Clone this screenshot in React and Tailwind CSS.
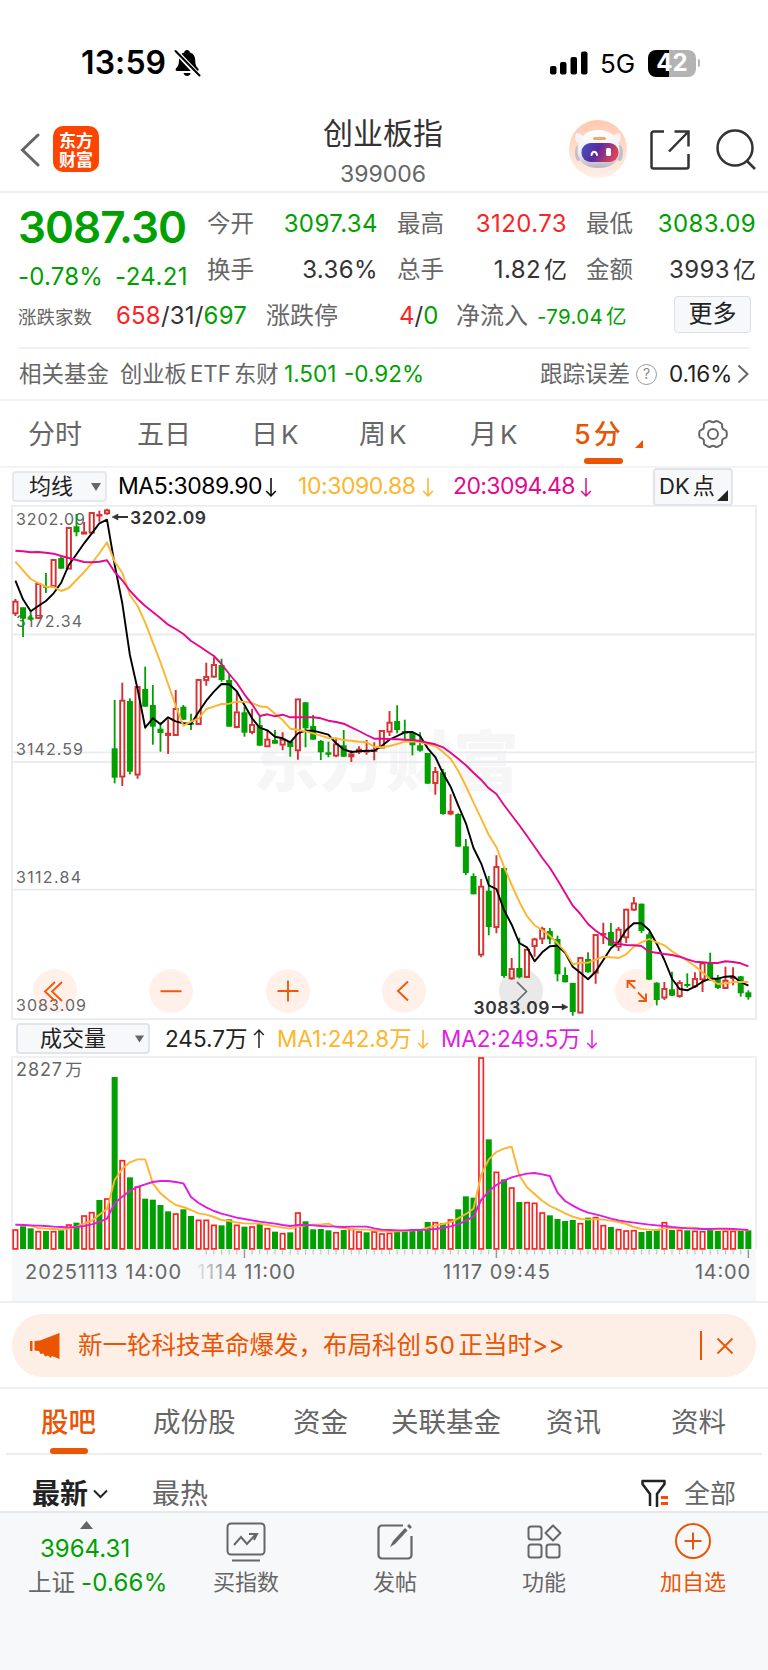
const STEP = 7.635;
const xAt = (i) => 15.4 + i * STEP;

// [up, high, bodyTop, bodyBottom, low]
const CANDLES = [
  [1, 599, 601, 614, 616], [0, 607.3, 607.3, 618.7, 637], [0, 611.5, 617.5, 619.7, 620.7], [1, 583.3, 583.3, 618.7, 618.7],
  [0, 573, 586.3, 587.7, 593], [1, 559.3, 559.3, 586.7, 586.7], [0, 556, 558, 568.7, 568.7], [1, 527.3, 527.3, 569.3, 569.3],
  [0, 514, 526.3, 532.3, 536.3], [1, 522, 531.7, 534.3, 534.3], [1, 512.3, 512.3, 533.3, 533.3], [1, 510.7, 514.3, 516.3, 521.7],
  [1, 508.7, 509.7, 514, 514.7], [0, 700, 748.3, 777.7, 783.3], [1, 682.7, 700, 777.3, 786], [0, 698.3, 701, 771.7, 774.3],
  [1, 686, 686.3, 775.3, 778.7], [0, 666.7, 689, 706.7, 706.7], [0, 685, 705, 726.7, 744.7], [0, 722.3, 728.7, 733, 751.7],
  [1, 719.3, 733, 735.7, 754], [1, 690, 708.3, 735.7, 736], [0, 705, 706.7, 719.7, 720], [0, 713.7, 723, 724.7, 730],
  [1, 679.3, 679.3, 724.7, 724.7], [1, 662.7, 676.3, 680.7, 685.7], [1, 657.3, 664.3, 677.3, 677.7], [0, 658.7, 665, 680, 681.7],
  [0, 674, 680, 726.7, 726.7], [1, 691.3, 711.7, 727.7, 728.3], [0, 706.7, 712.3, 732.7, 736.7], [1, 708.7, 724.3, 732.7, 734.3],
  [0, 715.7, 725, 745.7, 745.7], [1, 730, 739, 747, 747], [0, 730, 740, 743.7, 743.7], [1, 732.3, 739, 745.3, 750.3],
  [0, 740.7, 741.3, 747, 756.7], [1, 698.7, 698.7, 751, 759.7], [0, 702, 702.3, 728.3, 747.3], [0, 715, 726, 739.7, 739.7],
  [0, 740, 741, 752.3, 760], [0, 741.7, 752.3, 754.7, 757.3], [1, 737.7, 743.7, 756.3, 757.3], [0, 730, 745.3, 756.7, 757],
  [1, 750.3, 753.7, 757, 762], [1, 746.3, 749, 752.3, 754], [1, 740, 750.3, 752.3, 754.7], [1, 742.3, 749.7, 750.7, 760.3],
  [1, 730.3, 730.3, 748.3, 748.3], [1, 711, 722, 732.3, 736], [0, 705.3, 721, 730, 733.3], [0, 719.7, 731, 733.5, 740.3],
  [0, 731.3, 732.3, 745.3, 755.3], [0, 732.3, 745.3, 750.7, 751.7], [0, 753, 753, 783.7, 783.7], [1, 767, 771.3, 783.7, 794.7],
  [0, 769, 772.3, 814, 814.7], [1, 794.3, 811, 814.3, 815.3], [0, 813.3, 814, 846.7, 846.7], [0, 839, 846.3, 873, 875],
  [0, 873.3, 876, 894.3, 894.3], [1, 879, 886, 955.3, 957.3], [0, 876, 890.7, 927, 935.3], [1, 855.3, 866.3, 927.7, 933.3],
  [0, 867.7, 868, 976, 977.7], [1, 958, 968.3, 979, 979.7], [0, 937.7, 968, 977.3, 978.3], [1, 949, 949, 977.7, 977.7],
  [1, 937.7, 938.7, 946.7, 956.7], [1, 926.7, 928.3, 939.3, 944], [0, 928, 931, 939.3, 944], [0, 935.7, 939, 974.3, 981.3],
  [0, 967.3, 975, 982.3, 982.3], [0, 982.7, 983, 1012, 1015.7], [1, 957.3, 957.3, 1013.3, 1013.3], [0, 952.3, 959, 972.3, 972.7],
  [1, 934, 934.3, 973.3, 983.7], [1, 922.7, 933.3, 934.7, 944], [0, 923, 932, 945.7, 946], [1, 927, 929, 947.3, 951],
  [1, 908.7, 909, 938, 943], [1, 897, 902.7, 910.3, 911], [0, 903.5, 903.7, 931, 933], [0, 932.3, 934.3, 979.7, 980],
  [0, 982.3, 982.7, 1000, 1005.3], [1, 982, 988.3, 998.3, 1000], [0, 971.7, 989.3, 995.7, 996], [1, 980.3, 982.3, 996.7, 997.7],
  [0, 973.3, 984, 986, 987.7], [1, 972.3, 978.3, 987, 988], [1, 962.3, 962.7, 980, 992], [0, 952.7, 962.7, 979, 981],
  [0, 975, 978.3, 988, 989], [1, 966.7, 980, 988.7, 988.7], [1, 967.3, 976.7, 978.7, 985.3], [0, 976, 976.3, 993.3, 996.7],
  [0, 990.3, 992.3, 997.3, 999.7],
];

const MA5 = [
  580.7, 599.3, 611.3, 606, 601, 593.3, 582.7, 565, 554.3, 543.3, 533.3, 523.3, 519.7, 565, 603.3, 655, 689.3, 727.7, 718.3, 724.3,
  717.3, 721.3, 723.3, 724, 712, 700.7, 691.7, 684, 684.3, 691.3, 705, 718.3, 727.7, 730.3, 736.7, 738.3, 742.3, 733.3, 730.7, 730.7,
  732.7, 734.7, 743.3, 749.3, 752, 751.3, 750.7, 750.7, 745.7, 739.7, 736, 732.3, 732, 736, 748.3, 757, 773.3, 786.7, 805.3, 823.3,
  848, 863.3, 885.3, 889, 910, 924.7, 943, 947.3, 961.3, 952.3, 946.3, 945.7, 952.7, 966.7, 972.7, 979.3, 971.7, 960, 948.3, 942,
  930, 923.3, 923.3, 930, 943.7, 960, 978.7, 989, 990.3, 986.7, 981.7, 978.7, 978.7, 976.7, 976.3, 982, 985.7,
];

const MA10 = [
  561.7, 570.3, 579, 583, 586.7, 587, 591, 588, 580, 572, 563.3, 553.3, 542.3, 561.7, 572.7, 595, 606, 622.7, 642.3, 662.3,
  684, 705.7, 725.7, 721.7, 718.7, 709, 706.7, 704, 703.7, 701.7, 701.7, 703, 706.3, 707.3, 713.7, 720, 728.7, 730, 731.3, 733.3,
  735.7, 738, 738.3, 740, 740.7, 741.7, 742.3, 746.7, 747.3, 746, 744, 741.7, 741.3, 742, 744, 746, 752, 758.7, 770.7, 786,
  802.7, 818.3, 835, 847, 866.7, 885, 901.7, 916, 925.3, 930, 935.7, 943.3, 951.7, 964.3, 962.7, 962.7, 959.7, 956.7, 957.3, 958,
  954.3, 946.7, 942.3, 939, 942.3, 945.3, 951.3, 956, 960.7, 966, 972.3, 979.3, 984, 983.3, 982, 982, 982,
];

const MA20 = [
  550.7, 551.3, 552.3, 552, 552.7, 553.7, 556, 558, 560, 562, 562.3, 561.7, 560.3, 572, 580.3, 590.7, 599, 606, 612, 618.3,
  624.7, 629, 634, 641, 645.7, 651, 656, 664, 674, 683, 694.3, 704.3, 716, 714.3, 716.3, 714.7, 717.3, 717.3, 717.3, 717.3,
  718.3, 720.7, 722, 723.7, 727.3, 731, 735, 738.7, 738.7, 739, 739.3, 739.7, 740, 741, 742.7, 744.3, 747.3, 752.7, 758.7, 765.3,
  772.7, 779.7, 788.3, 794, 805, 815.3, 825.3, 835.7, 846.7, 857.7, 867.7, 880, 892.7, 905.7, 914, 924, 930.7, 935.7, 941.3, 944,
  945, 945.3, 946, 951.7, 952.7, 954, 955, 956.7, 959.3, 961.7, 962.3, 963, 963, 961.3, 962, 963.3, 966.3,
];

// volume series on a 0..580 scale measured from the top, negative = falling bar
const VOLUMES = [
  538, -529, -535, 543, -543, 543, -541, 523, -518, 496, 486, -450, 445, -81, 330, -382, 409, -446, -449, -465,
  -484, 490, -478, -498, 509, 509, 524, -526, -508, 524, -530, 529, -522, 534, -545, 549, -547, 487, -514, -538,
  -537, -541, 546, -540, 536, 544, -547, 544, 550, 548, -545, -543, -539, -541, -516, 516, -519, 508, -478, -439,
  -443, 22, -268, 365, -388, 412, -456, 456, 458, 487, -496, -507, -513, -510, 519, -503, 501, 525, -531, 537,
  541, 540, -546, -543, -540, 516, -540, 539, -541, 542, 543, -539, -543, 542, 542, -543, -541,
];

const VMA1 = [
  524, 525, 527, 534, 536, 537, 538, 536, 530, 521, 512, 494, 477, 390, 356, 337, 328, 328, 400, 430,
  449, 465, 471, 480, 490, 494, 501, 510, 513, 517, 520, 521, 521, 525, 529, 533, 536, 530, 526, 524,
  523, 521, 531, 535, 537, 539, 539, 541, 543, 545, 544, 543, 541, 540, 533, 527, 522, 516, 505, 492,
  476, 375, 328, 306, 296, 290, 376, 412, 432, 452, 468, 478, 490, 500, 507, 509, 507, 509, 512, 516,
  522, 531, 537, 539, 540, 535, 535, 534, 533, 533, 537, 538, 539, 539, 540, 540, 541,
];

const VMA2 = [
  524, 525, 526, 527, 528, 530, 531, 532, 531, 528, 523, 516, 506, 460, 440, 422, 411, 403, 396, 393,
  393, 396, 400, 441, 459, 472, 483, 491, 497, 503, 507, 511, 515, 518, 521, 525, 528, 525, 525, 526,
  528, 529, 530, 531, 530, 530, 530, 535, 539, 540, 541, 541, 540, 540, 539, 537, 534, 529, 523, 512,
  500, 450, 424, 405, 392, 382, 376, 371, 369, 373, 378, 428, 453, 467, 479, 488, 493, 499, 506, 511,
  515, 518, 521, 524, 526, 528, 531, 533, 535, 536, 537, 537, 536, 536, 537, 538, 540,
];

const toPoints = (values) => values.map((y, i) => `${xAt(i).toFixed(1)},${y}`).join(' ');
const volY = (v) => Math.abs(v) / 3 + 1050;

function Arrow({ up, className }) {
  return (
    <svg width="12" height="24" viewBox="0 0 12 24" fill="none" stroke="currentColor" strokeWidth="1.5" className={`shrink-0 ${className}`}>
      {up ? <path d="M6 21V3M1.2 8 6 3l4.8 5" /> : <path d="M6 3v18M1.2 16 6 21l4.8-5" />}
    </svg>
  );
}

function StatusBar() {
  return (
    <div className="flex h-[100px] items-center pt-[26px] pl-[81px] text-black">
      <span className="w-[93px] text-[32px] font-semibold tracking-[0.1px]">13:59</span>
      <svg width="27" height="28" viewBox="0 0 27 28">
        <path d="M13 1c1.700 0 2.700 1 2.900 2.400 3.600 1 5.300 4 5.300 7.600 0 5.500 1.500 6.600 3 8.500.8 1 .4 2.500-1 2.500H3C1.600 22 1.200 20.500 2 19.500c1.500-1.900 3-3 3-8.500 0-3.600 1.600-6.600 5.200-7.600C10.400 2 11.400 1 13 1Z" />
        <path d="M9.500 24h7.200c-.4 1.900-1.800 3-3.600 3s-3.200-1.100-3.600-3Z" />
        <path d="M1 1.500 25 27" stroke="#fff" strokeWidth="5" />
        <path d="M1.500 2 25.500 26.500" stroke="#000" strokeWidth="2" strokeLinecap="round" />
      </svg>
      <svg width="38" height="24" viewBox="0 0 38 24" className="ml-[349px]">
        <rect x="0" y="15" width="6.500" height="8.500" rx="2" />
        <rect x="10" y="11" width="6.500" height="12.500" rx="2" />
        <rect x="20.500" y="6" width="6.500" height="17.500" rx="2" />
        <rect x="31" y="0.500" width="6.500" height="23" rx="2" />
      </svg>
      <span className="ml-[12px] w-[48px] text-[26px]">5G</span>
      <div className="flex h-[27px] w-[48px] items-center justify-center rounded-[8px] bg-[linear-gradient(90deg,#000_43%,#b3b3b3_43%)] text-[24px] font-bold leading-none text-white">
        42
      </div>
      <div className="ml-[2px] h-[8px] w-[2px] rounded-r-full bg-[#b3b3b3]" />
    </div>
  );
}

function Robot() {
  return (
    <svg width="58" height="58" viewBox="0 0 58 58">
      <defs>
        <linearGradient id="halo" x1="0" y1="0" x2="0" y2="1">
          <stop offset="0" stopColor="#ffc9ad" />
          <stop offset="1" stopColor="#fff0e8" />
        </linearGradient>
        <linearGradient id="visor" x1="0" y1="0" x2="1" y2="0.300">
          <stop offset="0" stopColor="#3d55c8" />
          <stop offset="0.500" stopColor="#5a2aa0" />
          <stop offset="1" stopColor="#d9405a" />
        </linearGradient>
        <linearGradient id="shell" x1="0" y1="0" x2="0" y2="1">
          <stop offset="0" stopColor="#fff" />
          <stop offset="0.600" stopColor="#efedf1" />
          <stop offset="1" stopColor="#b9b4bd" />
        </linearGradient>
      </defs>
      <circle cx="29" cy="29" r="29" fill="url(#halo)" />
      <path d="M7 13c2 0 6 1 9 5l-8 5c-2-3-2-7-1-10ZM51 13c-2 0-6 1-9 5l8 5c2-3 2-7 1-10Z" fill="#f4f3f6" />
      <ellipse cx="9.500" cy="33" rx="3.500" ry="8" fill="#c2bec8" />
      <ellipse cx="50.500" cy="33" rx="3.500" ry="8" fill="#c2bec8" />
      <path d="M29 10c14 0 21.500 9 21.500 21C50.500 42 42 48 29.500 48S8.500 42 8.500 31C8.500 19 16 10 29 10Z" fill="url(#shell)" />
      <rect x="24" y="17" width="13" height="3" rx="1.500" fill="#f0a868" />
      <rect x="12.500" y="23" width="37" height="19" rx="9" fill="url(#visor)" />
      <path d="M22.500 35c1-4.500 4.500-4.500 5.500 0" fill="none" stroke="#fff" strokeWidth="2" strokeLinecap="round" />
      <rect x="37" y="28" width="5" height="8" rx="1.500" fill="#fff" />
    </svg>
  );
}

function Header() {
  return (
    <div className="flex h-[93px] items-start border-b-2 border-[#eeeeee]">
      <svg width="20" height="34" viewBox="0 0 20 34" className="mt-[33px] ml-[20px]" fill="none" stroke="#666" strokeWidth="3">
        <path d="M18 2 2.500 17 18 32" strokeLinecap="round" />
      </svg>
      <div className="mt-[26px] ml-[13px] flex h-[46px] w-[46px] flex-col items-center justify-center rounded-[10px] bg-[#ff4400] font-['Noto_Sans_CJK_SC',sans-serif] text-[17px] font-bold leading-[19px] text-white">
        <span>东方</span>
        <span>财富</span>
      </div>
      <div className="ml-[184px] flex w-[200px] flex-col items-center">
        <div className="mt-[14px] text-[30px] leading-[38px] text-[#333]">创业板指</div>
        <div className="mt-[8px] text-[23px] leading-[28px] text-[#666]">399006</div>
      </div>
      <div className="mt-[20px] ml-[86px]"><Robot /></div>
      <svg width="42" height="42" viewBox="0 0 42 42" className="mt-[29px] ml-[22px]" fill="none" stroke="#333" strokeWidth="2.500">
        <path d="M15 2.500H4.500a2 2 0 0 0-2 2v33a2 2 0 0 0 2 2h33a2 2 0 0 0 2-2V25M20 22.500 39 3M25.500 2.500h14v15" />
      </svg>
      <svg width="44" height="44" viewBox="0 0 44 44" className="mt-[28px] ml-[24px]" fill="none" stroke="#333" strokeWidth="2.500">
        <circle cx="20" cy="20" r="17.500" />
        <path d="m32 33 8 8" />
      </svg>
    </div>
  );
}

function Stat({ label, value, unit, color }) {
  return (
    <div className="flex items-center justify-between">
      <span className="text-[23.5px] text-[#666]">{label}</span>
      <span className={`text-[24px] tracking-[0.4px] ${color}`}>
        {value}
        {unit && <span className="ml-[3px] text-[23px] tracking-normal">{unit}</span>}
      </span>
    </div>
  );
}

function Quote() {
  return (
    <div className="h-[208px] border-b-2 border-[#f4f4f4]">
      <div className="grid h-[104px] grid-cols-[170px_171px_170px_170px] gap-x-[19px] pl-[18px]">
        <div className="text-[#00a000]">
          <div className="mt-[7px] text-[44px] font-semibold leading-[54px] tracking-[-1px]">3087.30</div>
          <div className="mt-[8px] flex text-[24px] leading-[30px]">
            <span className="w-[97px] tracking-[0.2px]">-0.78%</span>
            <span className="tracking-[0.4px]">-24.21</span>
          </div>
        </div>
        <div className="flex flex-col pt-[8px] leading-[46px]">
          <Stat label="今开" value="3097.34" color="text-[#00a000]" />
          <Stat label="换手" value="3.36%" color="text-[#333]" />
        </div>
        <div className="flex flex-col pt-[8px] leading-[46px]">
          <Stat label="最高" value="3120.73" color="text-[#f92525]" />
          <Stat label="总手" value="1.82" unit="亿" color="text-[#333]" />
        </div>
        <div className="flex flex-col pt-[8px] leading-[46px]">
          <Stat label="最低" value="3083.09" color="text-[#00a000]" />
          <Stat label="金额" value="3993" unit="亿" color="text-[#333]" />
        </div>
      </div>

      <div className="flex h-[50px] items-center pb-[13px] pl-[18px] text-[24px] text-[#666]">
        <span className="w-[98px] pt-[5px] text-[18.5px]">涨跌家数</span>
        <span className="w-[150px] tracking-[0.2px] text-[#333]">
          <span className="text-[#f92525]">658</span>/31/<span className="text-[#00a000]">697</span>
        </span>
        <span className="w-[133px]">涨跌停</span>
        <span className="w-[57px] text-[#333]">
          <span className="text-[#f92525]">4</span>/<span className="text-[#00a000]">0</span>
        </span>
        <span className="w-[81px]">净流入</span>
        <span className="w-[137px] pt-[4px] text-[20.5px] tracking-[0.3px] text-[#00a000]">-79.04<span className="ml-[3px]">亿</span></span>
        <span className="-mt-[3px] flex h-[37px] w-[77px] items-center justify-center rounded-[4px] border border-[#dcdfe8] bg-[#f7f8fa] text-[24px] text-[#222]">
          更多
        </span>
      </div>

      <div className="mx-[19px] flex h-[52px] items-center border-t-2 border-[#f1f1f1] text-[22.5px] text-[#666]">
        <span className="w-[101px]">相关基金</span>
        <span className="w-[164px] text-[22.300px]">创业板<span className="mx-[3px]">ETF</span>东财</span>
        <span className="w-[60px] text-[#00a000]">1.501</span>
        <span className="w-[196px] text-[#00a000]">-0.92%</span>
        <span className="w-[96px]">跟踪误差</span>
        <span className="flex h-[21px] w-[21px] shrink-0 items-center justify-center rounded-full border-[1.5px] border-[#999] text-[14px] leading-none text-[#888]">?</span>
        <span className="ml-[12px] w-[68px] shrink-0 text-[#222]">0.16%</span>
        <svg width="12" height="20" viewBox="0 0 12 20" className="shrink-0" fill="none" stroke="#666" strokeWidth="2">
          <path d="m1.500 1.500 9 8.500-9 8.500" />
        </svg>
      </div>
    </div>
  );
}

function PeriodTabs() {
  return (
    <div className="grid h-[67px] grid-cols-[109px_114px_108px_111px_104px_123px_98px] border-b-2 border-[#f4f4f4] pl-[28px] text-[27px] leading-[67px] text-[#666]">
      <span>分时</span>
      <span>五日</span>
      <span>日<span className="ml-[3px] text-[26px]">K</span></span>
      <span>周<span className="ml-[3px] text-[26px]">K</span></span>
      <span>月<span className="ml-[3px] text-[26px]">K</span></span>
      <div className="relative font-medium text-[#ea5504]">
        5<span className="ml-[3px]">分</span>
        <span className="absolute bottom-[4px] left-[10px] h-[6px] w-[39px] rounded-[3px] bg-[#ea5504]" />
        <svg width="8" height="8" viewBox="0 0 8 8" className="absolute top-[39px] left-[61px]"><path d="M8 0v8H0Z" fill="#ea5504" /></svg>
      </div>
      <svg width="32" height="32" viewBox="0 0 32 32" className="mt-[17px]" fill="none" stroke="#666" strokeWidth="2">
        <path d="M11.500 3.200c1.300-.9 2.600 1 4.500 1s3.200-1.900 4.500-1l4 2.300c1.500 1-.1 2.900.9 4.700s3.600 1.500 4.100 3.100c.4 1.700.4 3.700 0 5.400-.5 1.600-3.200 1.300-4.100 3.100s.6 3.700-.9 4.700l-4 2.300c-1.300.9-2.600-1-4.500-1s-3.200 1.900-4.500 1l-4-2.300c-1.500-1 .1-2.900-.9-4.700s-3.600-1.500-4.100-3.100c-.4-1.700-.4-3.700 0-5.400.5-1.600 3.200-1.300 4.100-3.100s-.6-3.700.9-4.700Z" />
        <circle cx="16" cy="16" r="5" />
      </svg>
    </div>
  );
}

function MaBar() {
  return (
    <div className="flex h-[37px] items-center pl-[12px] text-[23px]">
      <div className="flex h-[31px] w-[95px] items-center rounded-[4px] border-2 border-[#e6e8ed] bg-[#f7f8fa] pl-[15px] text-[22px] text-[#222]">
        均线
        <svg width="10" height="8" viewBox="0 0 10 8" className="ml-[18px]"><path d="M0 0h10L5 8Z" fill="#666" /></svg>
      </div>
      <span className="ml-[11px] w-[147px] shrink-0 tracking-[-0.45px] text-black">MA5:3089.90</span>
      <Arrow className="text-black" />
      <span className="ml-[21px] w-[124px] shrink-0 tracking-[-0.45px] text-[#fdb52d]">10:3090.88</span>
      <Arrow className="text-[#fdb52d]" />
      <span className="ml-[19px] w-[127px] shrink-0 tracking-[-0.6px] text-[#e4088c]">20:3094.48</span>
      <Arrow className="text-[#e4088c]" />
      <div className="relative ml-auto mr-[35px] flex h-[38px] w-[80px] items-center rounded-[4px] border-2 border-[#e1e4ea] bg-[#f7f8fa] pl-[4px] text-[22px] text-[#222]">
        DK<span className="ml-[3px]">点</span>
        <svg width="11" height="11" viewBox="0 0 11 11" className="absolute right-[3px] bottom-[3px]"><path d="M11 0v11H0Z" fill="#222" /></svg>
      </div>
    </div>
  );
}

function KlineChart() {
  return (
    <svg width="768" height="515" viewBox="0 505 768 515" className="block">
      <text x="253" y="786" textLength="266" fontSize="66" fontWeight="900" fill="#f6f6f6">东方财富</text>
      <g stroke="#e9ebf0" strokeWidth="1.800">
        <path d="M12 634.500h744M12 762h744M12 752.300h744M12 889.700h744" />
        <rect x="12" y="505.800" width="744" height="513.300" fill="none" />
      </g>
      <g fill="#fff1ea">
        <circle cx="55" cy="991" r="22" />
        <circle cx="171" cy="991" r="22" />
        <circle cx="288" cy="991" r="22" />
        <circle cx="404" cy="991" r="22" />
        <circle cx="521" cy="991" r="22" fill="#e9e9e9" />
        <circle cx="637" cy="991" r="22" />
      </g>
      <g fontSize="16" fill="#666">
        <text x="16" y="525.300" textLength="69">3202.09</text>
        <text x="16" y="627.300" textLength="66">3172.34</text>
        <text x="16" y="755.300" textLength="67">3142.59</text>
        <text x="16" y="883" textLength="65">3112.84</text>
        <text x="16" y="1011.300" textLength="70">3083.09</text>
      </g>

      {CANDLES.map(([up, high, top, bottom, low], i) => {
        const x = xAt(i);
        return up ? (
          <g key={i} stroke="#d62f2f" strokeWidth="1.900" fill="none">
            <path d={`M${x} ${high}V${top}M${x} ${bottom}V${low}`} />
            <rect x={x - 2.1} y={top + 0.7} width="4.200" height={Math.max(bottom - top - 1.4, 0.6)} />
          </g>
        ) : (
          <g key={i} fill="#00a000">
            <rect x={x - 0.9} y={high} width="1.800" height={low - high} />
            <rect x={x - 3} y={top} width="6" height={bottom - top} />
          </g>
        );
      })}

      <g fill="none" strokeWidth="1.900" strokeLinejoin="round">
        <polyline points={toPoints(MA5)} stroke="#000" />
        <polyline points={toPoints(MA10)} stroke="#fdb52d" />
        <polyline points={toPoints(MA20)} stroke="#e4088c" />
      </g>

      <g fill="none" stroke="#f0590c" strokeWidth="1.900">
        <path d="M55 982 45 991.500 55 1001M62 982 52 991.500 62 1001" />
        <path d="M160.500 991.300h21M277.500 991h21M288 980.500v21M408 981.500 398 991l10 9.500" />
        <path d="M627.500 988v-7h8M628 981.500l7 7M646 993.500v7.500h-7.500M646 1000.500l-8-8" />
      </g>
      <path d="m517 982 9.500 9.500-9.500 9.500" fill="none" stroke="#666" strokeWidth="1.600" />
      <g fontSize="17.500" fontWeight="600" fill="#333">
        <text x="130" y="523.800" textLength="76">3202.09</text>
        <text x="473.500" y="1013.500" textLength="76">3083.09</text>
      </g>
      <g stroke="#333" strokeWidth="1.800" fill="#333">
        <path d="M128 517h-14M552 1007h14" />
        <path d="m112 517 6-3v6ZM568 1007l-6-3v6Z" strokeWidth="0.500" />
      </g>
    </svg>
  );
}

function VolumeBar() {
  return (
    <div className="flex h-[36px] items-center pt-px pl-[16px] text-[22.5px]">
      <div className="flex h-[31px] w-[134px] items-center rounded-[4px] border-2 border-[#e1e4ea] bg-[#f7f8fa] pl-[22px] text-[22px] text-[#222]">
        成交量
        <svg width="9" height="8" viewBox="0 0 10 8" className="ml-[29px]"><path d="M0 0h10L5 8Z" fill="#666" /></svg>
      </div>
      <span className="ml-[15px] w-[88px] text-[#222]">245.7万</span>
      <Arrow up className="text-[#222]" />
      <span className="ml-[12px] w-[140px] text-[#fdb52d]">MA1:242.8万</span>
      <Arrow className="text-[#fdb52d]" />
      <span className="ml-[12px] w-[145px] text-[#e01ce0]">MA2:249.5万</span>
      <Arrow className="text-[#e01ce0]" />
    </div>
  );
}

function VolumeChart() {
  return (
    <svg width="768" height="245" viewBox="0 1056 768 245" className="block">
      <defs>
        <linearGradient id="fade" gradientUnits="userSpaceOnUse" x1="192" y1="0" x2="238" y2="0">
          <stop offset="0" stopColor="#f7f8fa" />
          <stop offset="1" stopColor="#666" />
        </linearGradient>
      </defs>
      <path d="M12 1249V1057h744v192" fill="none" stroke="#ebebee" strokeWidth="1.600" />
      <rect x="12" y="1249" width="744" height="52" fill="#f7f8fa" />
      <text x="16" y="1075.500" fontSize="18" fill="#666">
        <tspan textLength="46">2827</tspan><tspan x="65" fontSize="17.500">万</tspan>
      </text>
      {VOLUMES.map((v, i) => {
        const top = volY(v);
        return v > 0 ? (
          <rect key={i} x={xAt(i) - 2.2} y={top + 0.7} width="4.400" height={1248.2 - top} fill="#fff" stroke="#f92525" strokeWidth="1.700" />
        ) : (
          <rect key={i} x={xAt(i) - 3} y={top} width="6" height={1249 - top} fill="#00a000" />
        );
      })}
      <g fill="none" strokeWidth="1.900" strokeLinejoin="round">
        <polyline points={VMA1.map((v, i) => `${xAt(i)},${volY(v)}`).join(' ')} stroke="#fdb52d" />
        <polyline points={VMA2.map((v, i) => `${xAt(i)},${volY(v)}`).join(' ')} stroke="#e01ce0" />
      </g>
      {VOLUMES.map((_, i) => {
        if (i < 25) return null;
        const major = i === 30 || i === 63 || i === 96;
        return <path key={i} d={`M${xAt(i)} 1249.500v${major ? 8.5 : 5}`} stroke={major ? '#999' : '#bbb'} strokeWidth={major ? 1.5 : 1} />;
      })}
      <g fontSize="20" fill="#666">
        <text x="25" y="1278.500" textLength="156">20251113 14:00</text>
        <text x="197" y="1278.500" textLength="98" fill="url(#fade)">1114 11:00</text>
        <text x="443" y="1278.500" textLength="107">1117 09:45</text>
        <text x="695" y="1278.500" textLength="55">14:00</text>
      </g>
    </svg>
  );
}

function Banner() {
  return (
    <div className="h-[88px] border-y-2 border-[#eeeff1] px-[12px] pt-[11px]">
      <div className="flex h-[63px] items-center rounded-[31px] bg-[#fdeee6] pl-[18px] text-[#ea5504]">
        <svg width="30" height="26" viewBox="0 0 30 26" fill="currentColor">
          <path d="M0 8h2.500v10H0ZM4.500 8 10 7.500 29.500 0v26L22 23l-1 2-3-2.500-3 1-1.500-3-3 .5-1.500-3-4.500-.5Z" />
        </svg>
        <span className="ml-[18px] w-[622px] text-[24.5px]">
          新一轮科技革命爆发，布局科创<span className="mx-[3px] tracking-[0.6px]">50</span>正当时&gt;&gt;
        </span>
        <span className="h-[29px] w-[1.5px] bg-[#ea5504]" />
        <svg width="18" height="18" viewBox="0 0 18 18" className="ml-[14px]" stroke="currentColor" strokeWidth="1.800">
          <path d="m1.500 1.500 15 15M16.500 1.500l-15 15" />
        </svg>
      </div>
    </div>
  );
}

function ForumTabs() {
  return (
    <>
      <div className="mx-[6px] grid h-[66px] grid-cols-[112px_140px_98px_155px_125px_80px] border-b-2 border-[#eeeeee] pl-[35px] text-[27.5px] leading-[67px] text-[#666]">
        <div className="relative font-medium text-[#ea5504]">
          股吧
          <span className="absolute bottom-[2px] left-[9px] h-[6px] w-[38px] rounded-[3px] bg-[#ea5504]" />
        </div>
        <span>成份股</span>
        <span>资金</span>
        <span>关联基金</span>
        <span>资讯</span>
        <span>资料</span>
      </div>
      <div className="flex h-[56px] items-center overflow-hidden pt-[21px] pl-[32px] text-[28px] text-[#666]">
        <span className="w-[61px] font-bold text-[#222]">最新</span>
        <svg width="15" height="10" viewBox="0 0 15 10" fill="none" stroke="#222" strokeWidth="2"><path d="m1 1.500 6.500 6.500L14 1.500" /></svg>
        <span className="ml-[44px]">最热</span>
        <svg width="28" height="29" viewBox="0 0 28 29" className="ml-[433px]" fill="none" stroke="#222" strokeWidth="2.500" strokeLinejoin="round">
          <path d="M9 27V15L1.500 5V2h22v3L16 15v13" />
          <path d="M20 18.500h7M20 24.500h7" stroke="#ff4a00" strokeWidth="3" />
        </svg>
        <span className="ml-[15px] text-[26px]">全部</span>
      </div>
    </>
  );
}

function BottomBar() {
  return (
    <div className="grid h-[160px] grid-cols-[172px_148px_150px_148px_150px] border-t-2 border-[#e6e8ea] bg-[#f7f8fa] text-[22px] text-[#666]">
      <div className="flex flex-col items-center text-[24px] leading-[34px] text-[#00a000]">
        <svg width="13" height="8" viewBox="0 0 13 8" className="mt-[8px]"><path d="M6.500 0 13 8H0Z" fill="#666" /></svg>
        <div className="mt-[3px] w-full pl-[40px]">3964.31</div>
        <div className="w-full pl-[28px]"><span className="mr-[6px] text-[23.500px] text-[#666]">上证</span><span className="tracking-[0.2px]">-0.66%</span></div>
      </div>
      <div className="flex flex-col items-center">
        <svg width="40" height="40" viewBox="0 0 40 40" className="mt-[9px]" fill="none" stroke="#666" strokeWidth="2">
          <rect x="1.500" y="1.500" width="37" height="31" rx="3.500" />
          <path d="M6 38.500h28" />
          <path d="m8 23 7-8 6 7 9-10M23 12h8l-3 6" />
        </svg>
        <span className="mt-[4px]">买指数</span>
      </div>
      <div className="flex flex-col items-center">
        <svg width="38" height="38" viewBox="0 0 38 38" className="mt-[9px]" fill="none" stroke="#666" strokeWidth="2.200">
          <path d="M27 3.500H6a3.500 3.500 0 0 0-3.500 3.500v26A3.500 3.500 0 0 0 6 36.500h26a3.500 3.500 0 0 0 3.500-3.500V14" />
          <path d="m14 25 3-6L29 6l2.500 2.500L19 22Z" fill="#666" stroke="none" />
          <path d="m32.500 5.500 2-2" strokeWidth="4" />
        </svg>
        <span className="mt-[6px]">发帖</span>
      </div>
      <div className="flex flex-col items-center">
        <svg width="36" height="36" viewBox="0 0 36 36" className="mt-[11px]" fill="none" stroke="#666" strokeWidth="2">
          <rect x="2.500" y="2.500" width="13" height="13" rx="2.500" />
          <rect x="2.500" y="20.500" width="13" height="13" rx="2.500" />
          <rect x="20.500" y="20.500" width="13" height="13" rx="2.500" />
          <path d="m27 1.500 7.500 7.500-7.500 7.500L19.500 9Z" strokeLinejoin="round" />
        </svg>
        <span className="mt-[6px]">功能</span>
      </div>
      <div className="flex flex-col items-center text-[#ea5504]">
        <svg width="38" height="38" viewBox="0 0 38 38" className="mt-[9px]" fill="none" stroke="currentColor" strokeWidth="2">
          <circle cx="19" cy="19" r="17" />
          <path d="M10.500 19h17M19 10.500v17" />
        </svg>
        <span className="mt-[6px]">加自选</span>
      </div>
    </div>
  );
}

export default function App() {
  return (
    <div className="h-[1670px] w-[768px] overflow-hidden whitespace-nowrap bg-white font-['Inter','Noto_Sans_CJK_SC',sans-serif]">
      <StatusBar />
      <Header />
      <Quote />
      <PeriodTabs />
      <MaBar />
      <KlineChart />
      <VolumeBar />
      <VolumeChart />
      <Banner />
      <ForumTabs />
      <BottomBar />
    </div>
  );
}
